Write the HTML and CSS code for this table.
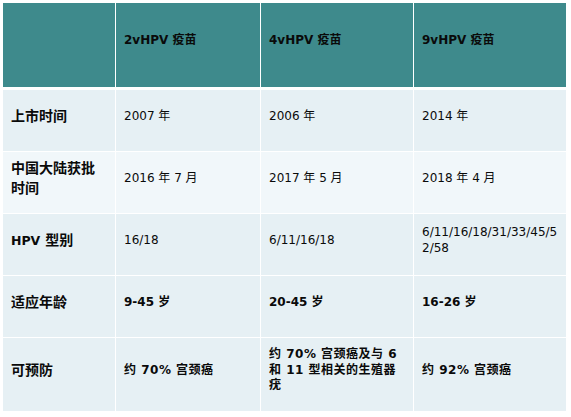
FILE: index.html
```html
<!DOCTYPE html>
<html lang="zh-CN">
<head>
<meta charset="utf-8">
<title>HPV 疫苗对比</title>
<link rel="stylesheet" href="styles.css">
</head>
<body>
<table class="compare">
  <colgroup>
    <col class="c-label">
    <col class="c-2v">
    <col class="c-4v">
    <col class="c-9v">
  </colgroup>
  <thead>
    <tr class="head">
      <th></th>
      <th>2vHPV 疫苗</th>
      <th>4vHPV 疫苗</th>
      <th>9vHPV 疫苗</th>
    </tr>
  </thead>
  <tbody>
    <tr class="row tint">
      <th>上市时间</th>
      <td>2007 年</td>
      <td>2006 年</td>
      <td>2014 年</td>
    </tr>
    <tr class="row light">
      <th>中国大陆获批时间</th>
      <td>2016 年 7 月</td>
      <td>2017 年 5 月</td>
      <td>2018 年 4 月</td>
    </tr>
    <tr class="row tint">
      <th><span class="latin">HPV</span> 型别</th>
      <td>16/18</td>
      <td>6/11/16/18</td>
      <td class="break">6/11/16/18/31/33/45/52/58</td>
    </tr>
    <tr class="row tint strong">
      <th>适应年龄</th>
      <td>9-45 岁</td>
      <td>20-45 岁</td>
      <td>16-26 岁</td>
    </tr>
    <tr class="row tint strong last">
      <th>可预防</th>
      <td>约 70% 宫颈癌</td>
      <td>约 70% 宫颈癌及与 6 和 11 型相关的生殖器疣</td>
      <td>约 92% 宫颈癌</td>
    </tr>
  </tbody>
</table>
</body>
</html>
```

FILE: styles.css
```css
html, body {
  margin: 0;
  padding: 0;
  background: #ffffff;
}

.compare {
  margin: 2px;
  border-collapse: separate;
  border-spacing: 1px;
  table-layout: fixed;
  width: 565px;
  font-family: "DejaVu Sans", Verdana, "Noto Sans CJK SC", sans-serif;
  font-size: 12px;
  line-height: 1.3;
  color: #0a0a0a;
}

.c-label { width: 112px; }
.c-2v { width: 144px; }
.c-4v { width: 152px; }
.c-9v { width: 152px; }

.compare th,
.compare td {
  padding: 3px 8px 11px 8px;
  vertical-align: middle;
  text-align: left;
}

.head th {
  height: 70px;
  background: #3e8a8c;
  font-weight: bold;
  border-bottom: 2px solid #ffffff;
}

.row th {
  font-family: "DejaVu Sans", "Noto Sans CJK SC", sans-serif;
  font-size: 14px;
  line-height: 1.36;
  font-weight: bold;
}

.row th .latin {
  font-size: 12.5px;
}

.row td {
  font-weight: normal;
}

.row.strong td {
  font-weight: bold;
}

.row.last td {
  letter-spacing: 0.5px;
}

.row th,
.row td {
  height: 47px;
}

.row.last th,
.row.last td {
  height: 59px;
}

.tint th,
.tint td {
  background: #e6f0f4;
}

.light th,
.light td {
  background: #f1f7fa;
}

.break {
  word-break: break-all;
}
```
